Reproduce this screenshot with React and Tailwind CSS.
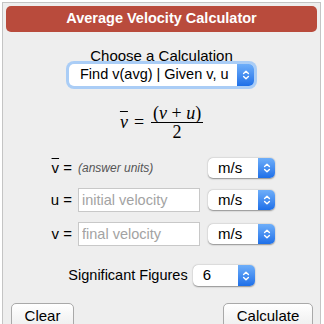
import React from "react";

function Stepper() {
  return (
    <span className="flex h-full w-[17px] shrink-0 items-center justify-center rounded-r-[5px] bg-linear-to-b from-[#6eaef9] to-[#1d6fe8]">
      <svg width="8" height="12" viewBox="0 0 8 12" fill="none" stroke="white" strokeWidth="1.4" strokeLinecap="round" strokeLinejoin="round">
        <path d="M1.6 4.6 L4 2.2 L6.4 4.6" />
        <path d="M1.6 7.4 L4 9.8 L6.4 7.4" />
      </svg>
    </span>
  );
}

function MacSelect({ className, text, textClass }) {
  return (
    <div className={"flex items-stretch rounded-[5px] bg-white shadow-[0_0.5px_1.5px_rgba(0,0,0,0.4)] " + className}>
      <span className={"flex flex-1 items-center whitespace-nowrap " + textClass}>{text}</span>
      <Stepper />
    </div>
  );
}

export default function App() {
  return (
    <div className="h-[324px] w-[324px] overflow-hidden bg-white pl-[2px] pt-[2px] font-['Liberation_Sans',Arial,sans-serif] text-black">
      <div className="h-[340px] w-[319px] border border-[#c4c4c4] bg-[#eeeeee] p-[3px]">
        <div className="flex h-[26px] items-center justify-center rounded-[5px] bg-[#b94b3c] text-[14.5px] font-bold text-white">
          Average Velocity Calculator
        </div>

        <div className="mt-[15px] text-center text-[15px] leading-[17px]">Choose a Calculation</div>

        <div className="flex justify-center">
          <MacSelect
            className="h-[22px] w-[185px] shadow-[0_0_0_3px_#aacdf6]"
            text="Find v(avg) | Given v, u"
            textClass="pl-[11px] text-[14.5px]"
          />
        </div>

        <div className="mt-[18px] flex items-center justify-center font-['Liberation_Serif','Times_New_Roman',serif] text-[18px]">
          <span className="italic overline decoration-1">v</span>
          <span className="ml-[6px] mr-[7px]">=</span>
          <span className="flex w-[52px] flex-col items-center">
            <span className="leading-[18px]">
              (<span className="italic">v</span> + <span className="italic">u</span>)
            </span>
            <span className="h-px w-full bg-black"></span>
            <span className="leading-[18px]">2</span>
          </span>
        </div>

        <div className="mt-[17px] flex h-[20px] items-center justify-center text-[15px]">
          <span className="w-[24px] whitespace-nowrap text-right"><span className="overline decoration-1">v</span> =</span>
          <span className="ml-[6px] w-[122px] text-[12px] italic text-[#555]">(answer units)</span>
          <MacSelect className="ml-[8px] h-[20px] w-[67px]" text="m/s" textClass="pl-[10px] text-[15px]" />
        </div>

        <div className="mt-[10px] flex h-[24px] items-center justify-center text-[15px]">
          <span className="w-[24px] whitespace-nowrap text-right">u =</span>
          <input
            className="ml-[6px] h-[24px] w-[122px] border border-[#c8c8c8] bg-white pl-[3px] text-[14.5px] outline-none placeholder:text-[#a3a3a3]"
            placeholder="initial velocity"
          />
          <MacSelect className="ml-[8px] h-[20px] w-[67px]" text="m/s" textClass="pl-[10px] text-[15px]" />
        </div>

        <div className="mt-[10px] flex h-[24px] items-center justify-center text-[15px]">
          <span className="w-[24px] whitespace-nowrap text-right">v =</span>
          <input
            className="ml-[6px] h-[24px] w-[122px] border border-[#c8c8c8] bg-white pl-[3px] text-[14.5px] outline-none placeholder:text-[#a3a3a3]"
            placeholder="final velocity"
          />
          <MacSelect className="ml-[8px] h-[20px] w-[67px]" text="m/s" textClass="pl-[10px] text-[15px]" />
        </div>

        <div className="mt-[19px] flex h-[21px] items-center justify-center text-[14.5px]">
          <span className="whitespace-nowrap">Significant Figures</span>
          <MacSelect className="ml-[5px] h-[21px] w-[62px]" text="6" textClass="pl-[10px] text-[15px]" />
        </div>

        <div className="mt-[17px] flex justify-between pl-[5px] pr-[4px]">
          <button className="h-[28px] w-[63px] rounded-[5px] border border-[#a9a9a9] bg-linear-to-b from-white to-[#ececec] pb-[2px] text-[15px]">
            Clear
          </button>
          <button className="h-[28px] w-[90px] rounded-[5px] border border-[#a9a9a9] bg-linear-to-b from-white to-[#ececec] pb-[2px] text-[15px]">
            Calculate
          </button>
        </div>
      </div>
    </div>
  );
}
